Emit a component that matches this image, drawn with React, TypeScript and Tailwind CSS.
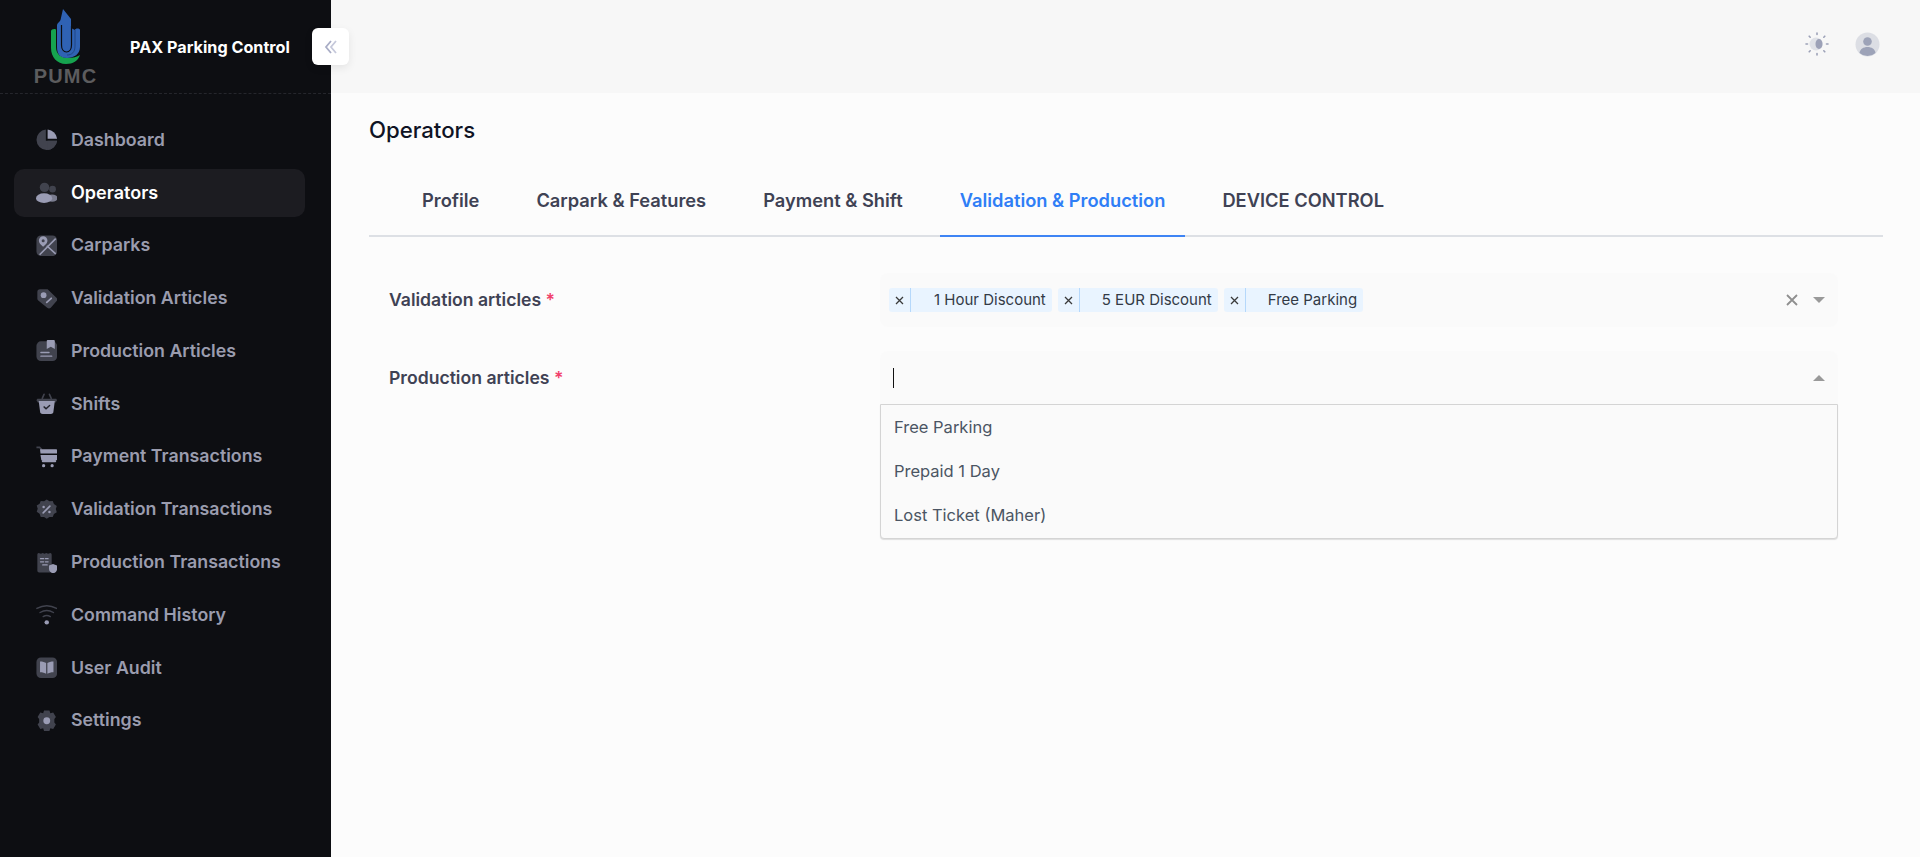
import React from "react";

const DARK = "#41434e";
const LIGHT = "#9a9cb4";

const icons: Record<string, React.ReactNode> = {
  dashboard: (
    <>
      <path d="M11 .500A11.500 11.500 0 1 0 23.500 13H11z" fill={DARK} />
      <path d="M13 .500V11h10.500A11.500 11.500 0 0 0 13 .500z" fill={LIGHT} />
      <path d="M13 13h10.500A11.500 11.500 0 0 1 13 23.500z" fill={DARK} />
    </>
  ),
  operators: (
    <>
      <circle cx="9.500" cy="6" r="5.300" fill={DARK} />
      <circle cx="18.500" cy="8" r="3.700" fill={DARK} />
      <ellipse cx="18" cy="18" rx="6" ry="4" fill={LIGHT} opacity="0.75" />
      <ellipse cx="9" cy="18" rx="9" ry="5.500" fill={LIGHT} />
    </>
  ),
  carparks: (
    <>
      <rect x="0.500" y="0.500" width="23" height="23" rx="5" fill={DARK} />
      <path d="M4 22 22 4M12 12l10 9" stroke={LIGHT} strokeWidth="1.800" fill="none" />
      <path d="M8 1.500a4.800 4.800 0 0 1 4.800 4.800C12.800 9.500 8 13 8 13S3.200 9.500 3.200 6.300A4.800 4.800 0 0 1 8 1.500z" fill={LIGHT} />
      <circle cx="8" cy="6.500" r="1.700" fill={DARK} />
    </>
  ),
  validation: (
    <>
      <path d="M1.500 4.500a3 3 0 0 1 3-3h8.500l9.500 9a3 3 0 0 1 0 4.500l-6 7a3 3 0 0 1-4 0L2.500 14a3 3 0 0 1-1-2z" fill={DARK} />
      <circle cx="8.500" cy="8" r="3.200" fill={LIGHT} />
      <path d="m12 16 5-4.500" stroke={LIGHT} strokeWidth="2" strokeLinecap="round" />
    </>
  ),
  production: (
    <>
      <rect x="0.500" y="1.500" width="23" height="22" rx="5" fill={DARK} />
      <path d="M13 0h7a1 1 0 0 1 1 1v9l-4.500-2.500L12 10V1a1 1 0 0 1 1-1z" fill={LIGHT} />
      <path d="M5.500 14h9M5.500 18h12" stroke={LIGHT} strokeWidth="1.600" strokeLinecap="round" />
    </>
  ),
  shifts: (
    <>
      <path d="M1.500 6.500h21l1 1.500-1.500 2.500H2L.500 8z" fill={DARK} />
      <path d="m7 6 2-4.500M17 6l-2-4.500" stroke={DARK} strokeWidth="1.800" strokeLinecap="round" />
      <path d="M3 9h18l-1.500 11.500a3 3 0 0 1-3 3h-9a3 3 0 0 1-3-3z" fill={LIGHT} />
      <path d="m9 15.500 2.200 2 4-3.500" stroke="#22232b" strokeWidth="1.600" fill="none" strokeLinecap="round" />
    </>
  ),
  payment: (
    <>
      <path d="M.500 1.500h3.500L6.500 4" stroke={DARK} strokeWidth="1.800" fill="none" />
      <path d="M4.500 3.500H22a2 2 0 0 1 2 2v3H5z" fill={LIGHT} />
      <path d="M5 10h19v4a2 2 0 0 1-2 2H6z" fill={LIGHT} />
      <rect x="6.500" y="15.500" width="16" height="2.500" rx="1" fill={LIGHT} />
      <circle cx="8.500" cy="22" r="1.800" fill={LIGHT} />
      <circle cx="18" cy="22" r="1.800" fill={LIGHT} />
    </>
  ),
  validationTx: (
    <>
      <path d="m12 .500 3 2 3.700-.2 1.300 3.400 3.200 2-1.100 3.600 1.100 3.400-3.200 2.100-1.300 3.400-3.700-.2-3 2-3-2-3.700.2L4 16.400.800 14.300l1.100-3.400L.800 7.300l3.200-2L5.300 2.300 9 2.500z" fill={DARK} />
      <path d="m8 15.500 7.500-7.500" stroke={LIGHT} strokeWidth="1.800" strokeLinecap="round" />
      <circle cx="8.500" cy="9" r="1.400" fill={LIGHT} />
      <circle cx="15" cy="14.500" r="1.400" fill={LIGHT} />
    </>
  ),
  productionTx: (
    <>
      <path d="M1.500 3c0-1 .6-2 1.500-2l2.500 1 2-1 2 1 2-1 2 1L16 1c.9 0 1.500 1 1.500 2v18a2 2 0 0 1-2 2h-12a2 2 0 0 1-2-2z" fill={DARK} />
      <path d="M5 7.500h3.500M10.500 7.500h3M5 11h3.500M10.500 11h3M7.500 14.500h5" stroke={LIGHT} strokeWidth="1.400" strokeLinecap="round" />
      <path d="M19 13.500l4.500 1.500v4c0 2.500-2 4-4.500 5-2.500-1-4.500-2.500-4.500-5v-4z" fill={LIGHT} />
    </>
  ),
  command: (
    <>
      <path d="M1 5c7-4 15-4 22 0" stroke={DARK} strokeWidth="1.600" fill="none" strokeLinecap="round" />
      <path d="M4.500 9.500c5-3 10-3 15 0" stroke={DARK} strokeWidth="1.600" fill="none" strokeLinecap="round" />
      <path d="M8 14c2.500-1.500 5.500-1.500 8 0" stroke={DARK} strokeWidth="1.600" fill="none" strokeLinecap="round" />
      <circle cx="12" cy="20.500" r="2.500" fill={LIGHT} />
    </>
  ),
  audit: (
    <>
      <rect x="0.500" y="0.500" width="23" height="23" rx="5" fill={DARK} />
      <path d="M4.500 5c2.700 0 5.500.6 6.800 1.800v12C10 17.700 7.200 17 4.500 17z" fill={LIGHT} />
      <path d="M19.500 5c-2.700 0-5.500.6-6.800 1.800v12c1.300-1.100 4.100-1.800 6.800-1.800z" fill={LIGHT} />
    </>
  ),
  settings: (
    <>
      <path d="M9 .500h6l1 3 3.200-.8 3 5.100L20.500 10v4l1.700 2.200-3 5.100-3.200-.8-1 3H9l-1-3-3.200.8-3-5.100L3.500 14v-4L1.800 7.800l3-5.100L8 3.500z" fill={DARK} />
      <circle cx="12" cy="12" r="3.800" fill={LIGHT} />
    </>
  ),
};

const navItems = [
  { key: "dashboard", label: "Dashboard" },
  { key: "operators", label: "Operators", active: true },
  { key: "carparks", label: "Carparks" },
  { key: "validation", label: "Validation Articles" },
  { key: "production", label: "Production Articles" },
  { key: "shifts", label: "Shifts" },
  { key: "payment", label: "Payment Transactions" },
  { key: "validationTx", label: "Validation Transactions" },
  { key: "productionTx", label: "Production Transactions" },
  { key: "command", label: "Command History" },
  { key: "audit", label: "User Audit" },
  { key: "settings", label: "Settings" },
];

const tabs = ["Profile", "Carpark & Features", "Payment & Shift", "Validation & Production", "DEVICE CONTROL"];

const Logo = () => (
  <svg width="32" height="57" viewBox="0 0 32 57" className="block">
    <path d="M1 23c0-2 5-3 5-1v17c0 7 5 11 12 11 5 0 9-1 12-3-2 6-7 9-14 9C7 56 1 49 1 40z" fill="#16a34f" />
    <path d="M7 17c0-2 3-3 3.500-5L13 1l8 10v9l4 2c0-2 5-2 5 0v17c0 7-6 11-13 11S7 46 7 39z" fill="#2f62b4" />
    <path d="M21.500 18v19c0 4-2 7-5 7s-5-3-5-7V17" stroke="#0d0e12" strokeWidth="1.200" fill="none" />
    <path d="M25 22v16c0 6-3 9-8 9" stroke="#1d3f78" strokeWidth="0.800" fill="none" />
  </svg>
);

const Chip = ({ label, gap }: { label: string; gap: string }) => (
  <span className="flex h-6 items-center rounded-[3px] bg-[#e9f4ff] text-[15px] leading-[22px] text-[#333a46]">
    <span className="flex h-6 w-[22px] items-center justify-center border-r border-[#b5d8fb]">
      <svg width="9" height="9" viewBox="0 0 9 9">
        <path d="M1 1l7 7M8 1 1 8" stroke="#3a3a3a" strokeWidth="1.300" />
      </svg>
    </span>
    <span className={gap}>{label}</span>
  </span>
);

export default function App() {
  return (
    <div className="flex h-screen w-full overflow-hidden bg-[#fcfcfc] font-['Inter',sans-serif]">
      <aside className="flex w-[331px] shrink-0 flex-col bg-[#0d0e12]">
        <div className="flex h-[94px] shrink-0 border-b border-dashed border-[#25262c]">
          <div className="flex w-[130px] flex-col items-center pl-[1px] pt-[8px]">
            <Logo />
            <span className="font-['Liberation_Sans',sans-serif] text-[20px] leading-[22px] font-bold tracking-[1.2px] text-[#5c5c5e]">
              PUMC
            </span>
          </div>
          <span className="mt-[37px] text-[16.2px] leading-[20px] font-bold text-white">PAX Parking Control</span>
        </div>
        <nav className="flex flex-col gap-[4.8px] pt-[22px] pr-[26px] pl-[14px]">
          {navItems.map((item) => (
            <a
              key={item.key}
              className={
                item.active
                  ? "flex h-12 items-center gap-[14px] rounded-[10px] bg-[#1c1c21] pl-[21.5px] text-[18px] font-semibold text-white"
                  : "flex h-12 items-center gap-[14px] rounded-[10px] pl-[21.5px] text-[17.8px] font-semibold text-[#9a9cae]"
              }
            >
              <svg width="21.5" height="21.5" viewBox="0 0 24 24" className="shrink-0">
                {icons[item.key]}
              </svg>
              {item.label}
            </a>
          ))}
        </nav>
      </aside>

      <main className="relative flex min-w-0 flex-1 flex-col">
        <button className="absolute top-[28px] left-[-19px] flex h-[37px] w-[37px] items-center justify-center rounded-[6px] bg-white shadow-[0_3px_8px_rgba(0,0,0,0.08)]">
          <svg width="16" height="16" viewBox="0 0 16 16" fill="none">
            <path d="M8 2 3 8l5 6" stroke="#a9adc6" strokeWidth="1.800" />
            <path d="M13 2 8 8l5 6" stroke="#c5c8da" strokeWidth="1.800" />
          </svg>
        </button>

        <header className="flex h-[93px] shrink-0 items-center justify-end gap-[26px] bg-[#f7f7f7] pr-[40px] pb-[5px]">
          <svg width="24" height="24" viewBox="0 0 24 24">
            <g stroke="#9ca1b7" strokeWidth="1.600" strokeLinecap="round">
              <path d="M12 1v1.500M12 21.500V23M1 12h1.500M21.500 12H23M4.200 4.200l1 1M18.800 18.800l1 1M4.200 19.800l1-1M18.800 5.200l1-1" />
            </g>
            <circle cx="11" cy="12" r="6.500" fill="#dfe1e7" />
            <ellipse cx="14" cy="12" rx="3.500" ry="5" fill="#9ca1b7" />
          </svg>
          <svg width="25" height="25" viewBox="0 0 25 25">
            <circle cx="12.500" cy="12.500" r="12" fill="#dcdee4" />
            <circle cx="12.500" cy="9.500" r="4.300" fill="#9da3b8" />
            <path d="M4.500 21c.5-4 4-6 8-6s7.500 2 8 6a12 12 0 0 1-16 0z" fill="#9da3b8" />
          </svg>
        </header>

        <div className="flex flex-col pr-[37px] pl-[38px]">
          <h1 className="pt-[25px] text-[22.2px] leading-[24px] font-medium text-[#0f1324]">Operators</h1>

          <div className="mt-[26px] flex h-[69px] gap-[17px] border-b-2 border-[#dde0e5] pl-[33px]">
            {tabs.map((tab, i) => (
              <span
                key={tab}
                className={
                  i === 3
                    ? "-mb-[2px] flex h-[69px] items-center border-b-2 border-[#3e84f4] px-[20px] pb-[1px] text-[18.3px] font-semibold text-[#2f7ef6]"
                    : "flex h-[67px] items-center px-[20px] pb-[1px] text-[18.3px] font-semibold text-[#3f4254]"
                }
              >
                {tab}
              </span>
            ))}
          </div>

          <div className="mt-[36px] flex flex-col gap-[24px] pr-[45px] pl-[20px]">
            <div className="flex">
              <label className="w-[491px] pt-[15px] text-[17.6px] leading-[24px] font-semibold text-[#3f4254]">
                Validation articles <span className="text-[#f1416c]">*</span>
              </label>
              <div className="flex h-[54px] flex-1 items-center rounded-[8px] bg-[#fafafa] pr-[13px] pl-[9px]">
                <div className="flex flex-1 gap-[6px]">
                  <Chip label="1 Hour Discount" gap="pr-[6px] pl-[23px]" />
                  <Chip label="5 EUR Discount" gap="pr-[6px] pl-[22px]" />
                  <Chip label="Free Parking" gap="pr-[6px] pl-[22px]" />
                </div>
                <svg width="12" height="12" viewBox="0 0 12 12" className="mr-[15px]">
                  <path d="M1 1l10 10M11 1 1 11" stroke="#8f8f8f" strokeWidth="1.800" />
                </svg>
                <svg width="12" height="6" viewBox="0 0 12 6">
                  <path d="M0 0h12L6 6z" fill="#999" />
                </svg>
              </div>
            </div>

            <div className="flex">
              <label className="w-[491px] pt-[15px] text-[17.6px] leading-[24px] font-semibold text-[#3f4254]">
                Production articles <span className="text-[#f1416c]">*</span>
              </label>
              <div className="relative flex h-[54px] flex-1 items-center rounded-t-[8px] bg-[#fafafa] pr-[13px] pl-[13px]">
                <span className="h-5 w-px bg-[#111]" />
                <svg width="12" height="6" viewBox="0 0 12 6" className="ml-auto">
                  <path d="M0 6h12L6 0z" fill="#999" />
                </svg>
                <ul className="absolute top-[53px] right-0 left-0 flex flex-col rounded-b-[4px] border border-[#d4d4d4] bg-[#fafafa] pb-[1px] text-[16.5px] text-[#4b5563] shadow-[0_1px_1px_rgba(0,0,0,0.12)]">
                  <li className="flex h-11 items-center pl-[13px]">Free Parking</li>
                  <li className="flex h-11 items-center pl-[13px]">Prepaid 1 Day</li>
                  <li className="flex h-11 items-center pl-[13px]">Lost Ticket (Maher)</li>
                </ul>
              </div>
            </div>
          </div>
        </div>
      </main>
    </div>
  );
}
